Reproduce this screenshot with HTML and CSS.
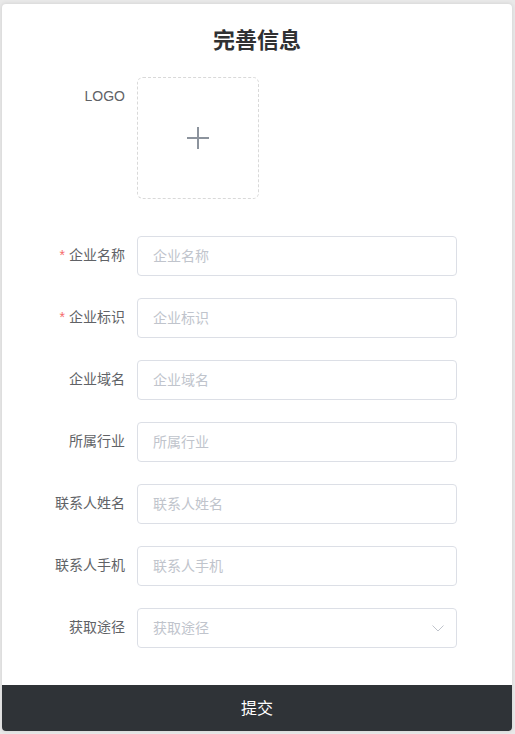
FILE: index.html
```html
<!DOCTYPE html>
<html lang="zh-CN">
<head>
<meta charset="utf-8">
<title>完善信息</title>
<link rel="stylesheet" href="styles.css">
</head>
<body>
<div class="card">
  <h1 class="title">完善信息</h1>
  <form class="form">
    <div class="item item-upload">
      <label class="label">LOGO</label>
      <div class="upload">
        <svg class="plus" width="22" height="22" viewBox="0 0 22 22"><path d="M11 0V22M0 11H22" stroke="#8c939d" stroke-width="2" fill="none"/></svg>
      </div>
    </div>
    <div class="item">
      <label class="label"><span class="star">*</span>企业名称</label>
      <div class="input"><span class="ph">企业名称</span></div>
    </div>
    <div class="item">
      <label class="label"><span class="star">*</span>企业标识</label>
      <div class="input"><span class="ph">企业标识</span></div>
    </div>
    <div class="item">
      <label class="label">企业域名</label>
      <div class="input"><span class="ph">企业域名</span></div>
    </div>
    <div class="item">
      <label class="label">所属行业</label>
      <div class="input"><span class="ph">所属行业</span></div>
    </div>
    <div class="item">
      <label class="label">联系人姓名</label>
      <div class="input"><span class="ph">联系人姓名</span></div>
    </div>
    <div class="item">
      <label class="label">联系人手机</label>
      <div class="input"><span class="ph">联系人手机</span></div>
    </div>
    <div class="item item-last">
      <label class="label">获取途径</label>
      <div class="input select"><span class="ph">获取途径</span>
        <svg class="arrow" width="12" height="7" viewBox="0 0 12 7"><path d="M0.5 0.5L6 6L11.5 0.5" stroke="#c0c4cc" stroke-width="1" fill="none"/></svg>
      </div>
    </div>
  </form>
  <div class="submit">提交</div>
</div>
</body>
</html>
```
FILE: styles.css
```css
html, body {
  margin: 0;
  padding: 0;
}
body {
  background: #e9e9e9;
  font-family: "Liberation Sans", "Noto Sans CJK SC", sans-serif;
  padding: 4px 3px 3px 2px;
  box-sizing: border-box;
  height: 734px;
}
.card {
  width: 510px;
  height: 727px;
  background: #fff;
  border-radius: 4px;
  box-shadow: 0 0 4px rgba(0, 0, 0, 0.12);
  display: flex;
  flex-direction: column;
  overflow: hidden;
}
.title {
  margin: 19px 0 24px;
  line-height: 30px;
  height: 30px;
  font-size: 22px;
  font-weight: bold;
  text-align: center;
  color: #303133;
  font-family: "Noto Sans CJK SC", sans-serif;
}
.form {
  flex: 1;
  display: flex;
  flex-direction: column;
  gap: 22px;
}
.item {
  display: flex;
  align-items: flex-start;
}
.item-upload {
  margin-bottom: 15px;
}
.label {
  width: 135px;
  box-sizing: border-box;
  padding-right: 12px;
  padding-bottom: 2px;
  text-align: right;
  font-size: 14px;
  line-height: 38px;
  color: #606266;
}
.star {
  color: #f56c6c;
  margin-right: 4px;
}
.upload {
  width: 122px;
  height: 122px;
  box-sizing: border-box;
  border: 1px dashed #d9d9d9;
  border-radius: 6px;
  display: flex;
  align-items: center;
  justify-content: center;
}
.input {
  width: 320px;
  height: 40px;
  box-sizing: border-box;
  border: 1px solid #dcdfe6;
  border-radius: 4px;
  padding: 0 15px 2px;
  display: flex;
  align-items: center;
  font-size: 14px;
}
.ph {
  color: #c0c4cc;
  flex: 1;
}
.arrow {
  margin-right: -3px;
  margin-top: 2px;
}
.submit {
  height: 46px;
  flex-shrink: 0;
  background: #2f3337;
  color: #fff;
  font-size: 16px;
  padding-bottom: 2px;
  box-sizing: border-box;
  display: flex;
  align-items: center;
  justify-content: center;
  font-family: "Noto Sans CJK SC", sans-serif;
}
```
